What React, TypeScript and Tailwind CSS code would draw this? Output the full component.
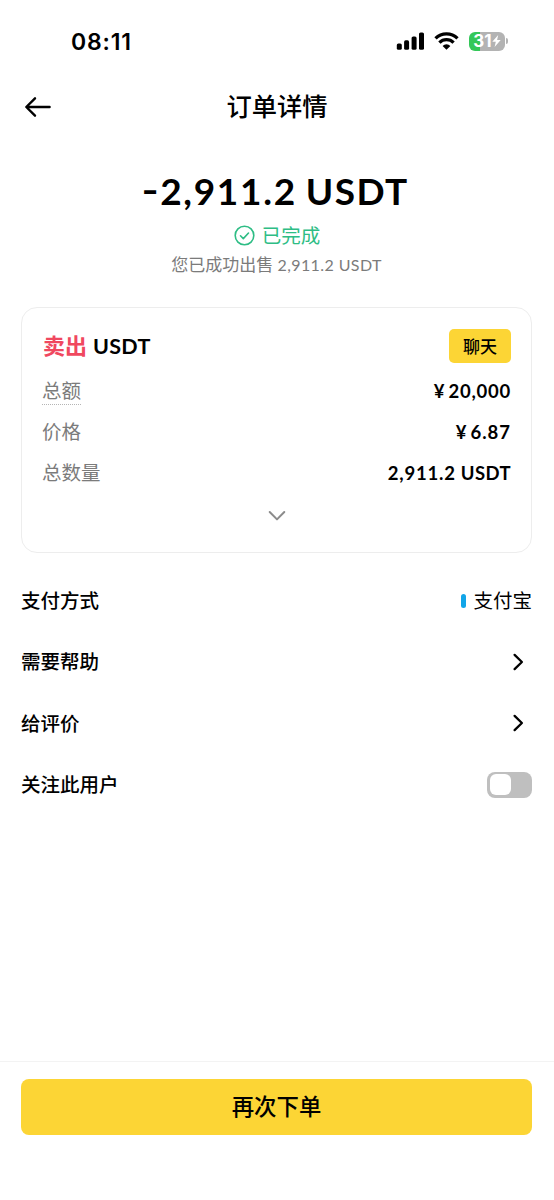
import React, { useState } from 'react';

interface DetailRow {
    label: string;
    value: string;
    unit?: string;
    dotted?: boolean;
    tracking: string;
}

const details: DetailRow[] = [
    { label: '总额', value: '20,000', dotted: true, tracking: 'tracking-[0.75px]' },
    { label: '价格', value: '6.87', tracking: 'tracking-[1px]' },
    { label: '总数量', value: '2,911.2', unit: 'USDT', tracking: 'tracking-[0.8px]' },
];

const StatusBar: React.FC = () => (
    <div className="flex h-[82px] items-center justify-between pl-[71px] pr-[46px]">
        <span className="pt-[2px] font-['Inter',sans-serif] text-[23px] font-semibold leading-none tracking-[0.8px]">08:11</span>
        <div className="flex items-center">
            <svg width="28" height="18" viewBox="0 0 28 18" fill="#000">
                <rect x="0.8" y="11.4" width="5" height="6.4" rx="1.6" />
                <rect x="8.1" y="8.3" width="5" height="9.5" rx="1.6" />
                <rect x="15.6" y="4.4" width="5" height="13.4" rx="1.6" />
                <rect x="23" y="0.4" width="5" height="17.4" rx="1.6" />
            </svg>
            <svg className="ml-2.5" width="25" height="18" viewBox="0 0 25 18" fill="none" stroke="#000" strokeWidth="3.3">
                <path d="M1.5 6.4a15.8 15.8 0 0 1 22 0" />
                <path d="M5.4 10.6a10.2 10.2 0 0 1 14.2 0" />
                <path d="M12.5 17.8 8.6 13.9a5.6 5.6 0 0 1 7.8 0Z" fill="#000" stroke="none" />
            </svg>
            <div className="ml-2.5 flex items-center">
                <div className="flex h-[19px] w-[36px] items-center justify-center overflow-hidden rounded-[6px] bg-[linear-gradient(to_right,#34c759_31%,#b3b3b3_31%)] text-white">
                    <span className="font-['Inter',sans-serif] text-[17px] font-bold leading-none">31</span>
                    <svg width="9" height="12" viewBox="0 0 9 12" fill="currentColor">
                        <path d="M6.2 0 0.3 6.8h3.5L2.6 12l6.1-7H5.1Z" />
                    </svg>
                </div>
                <div className="ml-px h-[6px] w-[2px] rounded-r-full bg-[#b3b3b3]" />
            </div>
        </div>
    </div>
);

const ChevronRight: React.FC = () => (
    <svg className="mr-[8px]" width="12" height="18" viewBox="0 0 12 18" fill="none" stroke="#000" strokeWidth="2.3" strokeLinecap="round" strokeLinejoin="round">
        <path d="m2.6 1.9 7.3 7.1-7.3 7.1" />
    </svg>
);

const ListRow: React.FC<{ label: string; children: React.ReactNode }> = ({ label, children }) => (
    <div className="flex h-[61.3px] items-center justify-between">
        <span className="font-medium">{label}</span>
        {children}
    </div>
);

export default function App() {
    const [following, setFollowing] = useState(false);

    return (
        <div className="flex h-[1200px] w-full flex-col bg-white font-['Lato','Noto_Sans_CJK_SC',sans-serif] text-[19.5px] text-black">
            <StatusBar />

            <header className="grid h-[49px] grid-cols-[1fr_auto_1fr] items-center px-6">
                <button className="w-fit">
                    <svg width="28" height="22" viewBox="0 0 28 22" fill="none" stroke="#000" strokeWidth="2.4" strokeLinecap="round" strokeLinejoin="round">
                        <path d="M25.6 11H2.5M11 2.3 2.3 11l8.7 8.7" />
                    </svg>
                </button>
                <h1 className="pt-px text-[25.3px] font-medium leading-none">订单详情</h1>
            </header>

            <section className="flex flex-col items-center pt-[37px]">
                <p className="flex items-baseline whitespace-nowrap text-[37px] font-bold leading-[46px]">
                    <span className="inline-block origin-right -translate-y-[2px] scale-x-125">-</span>
                    <span className="ml-[1px] tracking-[1.7px]">2,911.2</span>
                    <span className="ml-[9px] tracking-[1.4px]">USDT</span>
                </p>
                <div className="mt-[6px] flex h-[30px] items-center gap-[7px] text-[#2ebd85]">
                    <svg width="21" height="21" viewBox="0 0 21 21" fill="none" stroke="currentColor" strokeWidth="1.6" strokeLinecap="round" strokeLinejoin="round">
                        <circle cx="10.5" cy="10.5" r="9.3" />
                        <path d="m6.5 10.8 2.8 2.8 5.2-5.6" />
                    </svg>
                    <span className="pt-px leading-none">已完成</span>
                </div>
                <p className="mr-px whitespace-nowrap text-[17px] leading-[30px] text-[#7b7b7b]">
                    您已成功出售 <span className="text-[16px] tracking-[0.4px]">2,911.2 USDT</span>
                </p>
            </section>

            <section className="ml-[21px] mr-[22px] mt-[27px] h-[246px] rounded-2xl border-[1.5px] border-[#ededed] px-5 pt-[21px]">
                <div className="flex h-[34px] items-center justify-between">
                    <h2 className="flex items-baseline gap-[6px] pl-px pt-px text-[22px] font-bold leading-none">
                        <span className="text-[#f0485f]">卖出</span>
                        <span className="text-[21.5px] tracking-[0.3px]">USDT</span>
                    </h2>
                    <button className="h-[34px] w-[62px] rounded-[5px] bg-[#fcd535] text-[17px] font-medium leading-none">聊天</button>
                </div>
                <div className="mt-[7px]">
                    {details.map(row => (
                        <div key={row.label} className="flex h-[41px] items-center justify-between">
                            <span className={`leading-[27px] text-[#7b7b7b] ${row.dotted ? 'border-b-[1.5px] border-dotted border-[#b5b5b5]' : 'border-b-[1.5px] border-transparent'}`}>{row.label}</span>
                            <span className="flex items-baseline pt-px text-[18.5px] font-bold leading-none">
                                {!row.unit && <span className="mr-[4px]">¥</span>}
                                <span className={row.tracking}>{row.value}</span>
                                {row.unit && <span className="ml-[5px] tracking-[0.4px]">{row.unit}</span>}
                            </span>
                        </div>
                    ))}
                </div>
                <div className="mt-[17px] flex justify-center">
                    <svg width="18" height="12" viewBox="0 0 18 12" fill="none" stroke="#8c8c8c" strokeWidth="2" strokeLinecap="round" strokeLinejoin="round">
                        <path d="m1.7 2 7.3 7.4L16.3 2" />
                    </svg>
                </div>
            </section>

            <section className="pl-[21px] pr-[22px] pt-[17px]">
                <ListRow label="支付方式">
                    <span className="flex items-center gap-[7px]">
                        <i className="h-[14px] w-[5px] rounded-full bg-[#12a5e8]" />
                        支付宝
                    </span>
                </ListRow>
                <ListRow label="需要帮助"><ChevronRight /></ListRow>
                <ListRow label="给评价"><ChevronRight /></ListRow>
                <ListRow label="关注此用户">
                    <button
                        onClick={() => setFollowing(!following)}
                        className={`flex h-[26px] w-[45px] items-center rounded-[8px] bg-[#bfbfbf] p-[2.5px] ${following ? 'justify-end' : 'justify-start'}`}
                    >
                        <span className="h-[21px] w-[21px] rounded-[6px] bg-white" />
                    </button>
                </ListRow>
            </section>

            <footer className="mt-auto h-[139px] border-t border-[#f3f3f3] pl-[21px] pr-[22px] pt-[17px]">
                <button className="h-[56px] w-full rounded-[8px] bg-[#fcd535] text-[22.4px] font-medium">再次下单</button>
            </footer>
        </div>
    );
}
